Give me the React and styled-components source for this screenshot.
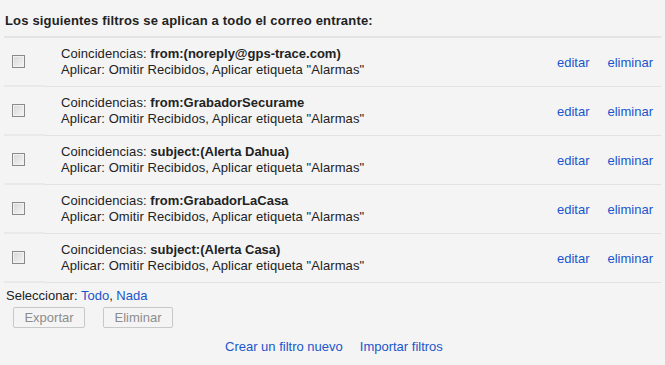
import React from "react";
import styled, { createGlobalStyle } from "styled-components";

const GlobalStyle = createGlobalStyle`
  html, body {
    margin: 0;
    padding: 0;
    background: #f4f4f4;
  }
  body {
    font-family: "Liberation Sans", Arial, sans-serif;
    font-size: 13px;
    color: #222;
  }
`;

const Page = styled.div`
  width: 665px;
  height: 365px;
  padding: 13px 4px 0 4px;
  box-sizing: border-box;
  background: #f4f4f4;
`;

const Heading = styled.div`
  font-weight: bold;
  font-size: 13px;
  line-height: 16px;
  letter-spacing: 0.17px;
  padding: 0 1px 7px 1px;
  border-bottom: 2px solid #e4e4e4;
`;

const Row = styled.div`
  display: grid;
  grid-template-columns: 41px 1fr auto;
  height: 49px;
`;

const CheckCell = styled.div`
  display: flex;
  align-items: center;
  padding-left: 8px;
  border-bottom: 2px solid #e9e9e9;
`;

const Check = styled.input.attrs({ type: "checkbox" })`
  appearance: none;
  margin: 0;
  width: 13px;
  height: 13px;
  box-sizing: border-box;
  border: 1px solid #8a8a8a;
  background: linear-gradient(135deg, #d6d6d6 0%, #f6f6f6 100%);
  box-shadow: inset 0 0 0 1px #f2f2f2;
`;

const TextCell = styled.div`
  display: flex;
  flex-direction: column;
  justify-content: center;
  padding-left: 16px;
  line-height: 16px;
  letter-spacing: 0.08px;
  border-bottom: 1px solid #e2e2e2;
  color: #222;
`;

const Bold = styled.b`
  font-weight: bold;
  letter-spacing: 0;
`;

const Actions = styled.div`
  display: flex;
  align-items: center;
  gap: 18px;
  padding-right: 8px;
  border-bottom: 1px solid #e2e2e2;
`;

const Link = styled.a`
  color: #1a55cc;
  text-decoration: none;
  cursor: pointer;
`;

const Select = styled.div`
  padding: 5px 2px 0;
  line-height: 16px;
`;

const Buttons = styled.div`
  display: flex;
  gap: 18px;
  padding: 3px 0 0 9px;
`;

const Button = styled.button`
  font-family: "Liberation Sans", Arial, sans-serif;
  font-size: 13px;
  color: #8c8c8c;
  background: #f4f4f4;
  border: 1px solid #c8c8c8;
  border-radius: 2px;
  height: 21px;
  width: ${({ w }) => w}px;
  padding: 0;
`;

const Footer = styled.div`
  display: flex;
  gap: 17px;
  padding: 11px 0 0 221px;
  line-height: 16px;
`;

const filters = [
  "from:(noreply@gps-trace.com)",
  "from:GrabadorSecurame",
  "subject:(Alerta Dahua)",
  "from:GrabadorLaCasa",
  "subject:(Alerta Casa)",
];

function App() {
  return (
    <>
      <GlobalStyle />
      <Page>
        <Heading>Los siguientes filtros se aplican a todo el correo entrante:</Heading>
        {filters.map((match) => (
          <Row key={match}>
            <CheckCell>
              <Check />
            </CheckCell>
            <TextCell>
              <div>
                Coincidencias: <Bold>{match}</Bold>
              </div>
              <div>Aplicar: Omitir Recibidos, Aplicar etiqueta "Alarmas"</div>
            </TextCell>
            <Actions>
              <Link>editar</Link>
              <Link>eliminar</Link>
            </Actions>
          </Row>
        ))}
        <Select>
          Seleccionar: <Link>Todo</Link>, <Link>Nada</Link>
        </Select>
        <Buttons>
          <Button w={72}>Exportar</Button>
          <Button w={70}>Eliminar</Button>
        </Buttons>
        <Footer>
          <Link>Crear un filtro nuevo</Link>
          <Link>Importar filtros</Link>
        </Footer>
      </Page>
    </>
  );
}

export default App;
